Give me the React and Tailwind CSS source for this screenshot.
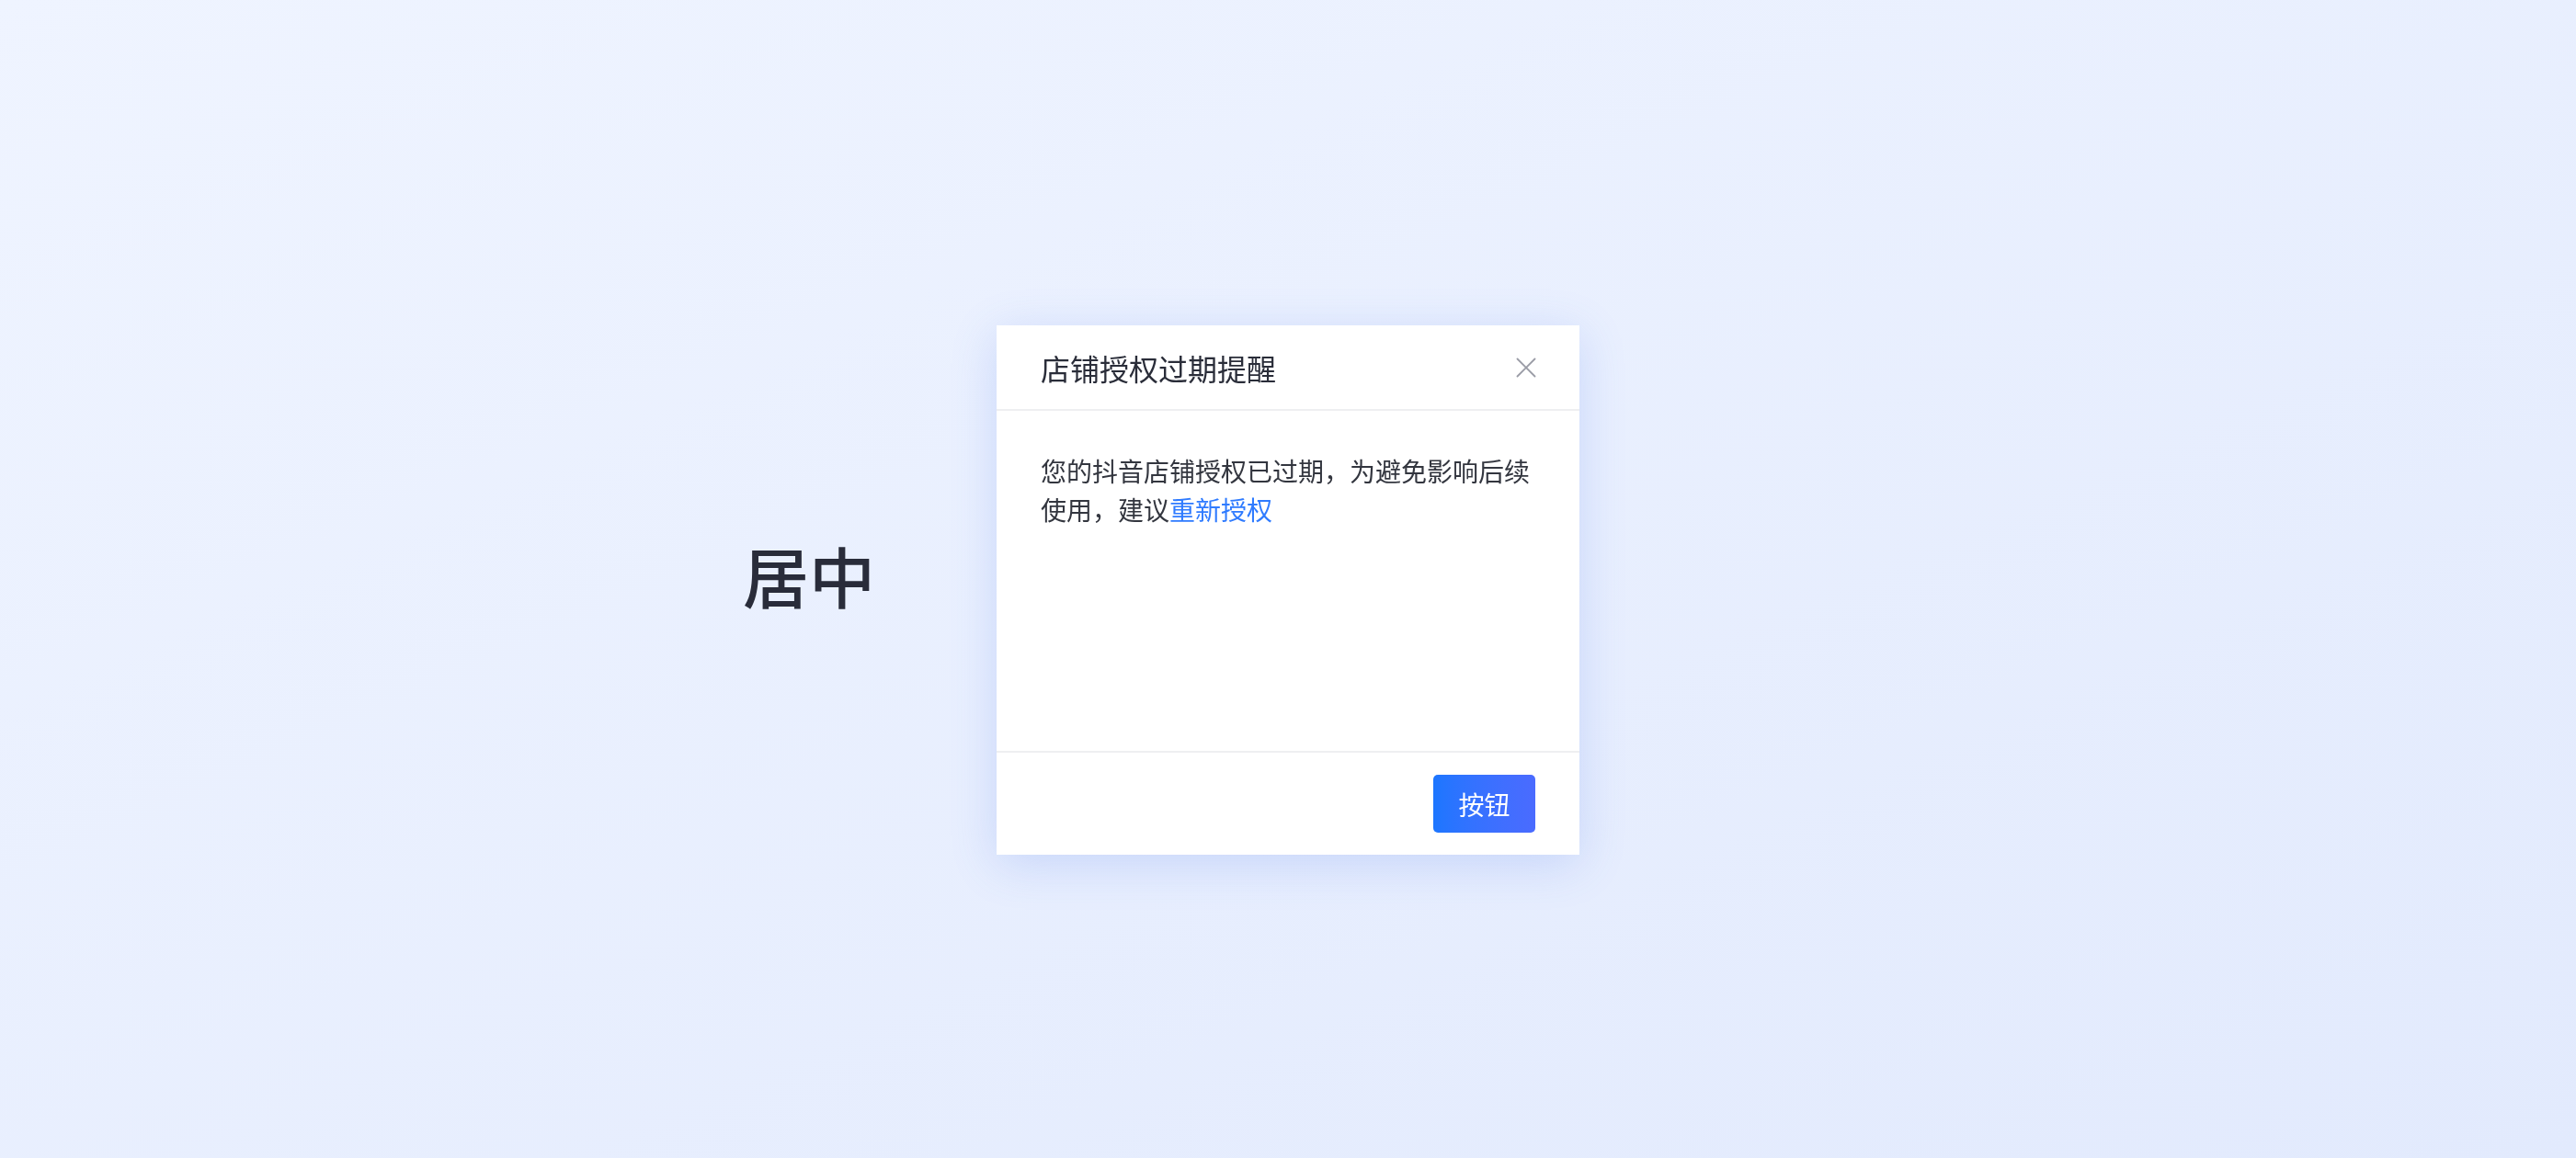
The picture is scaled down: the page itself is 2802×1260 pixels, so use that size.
const FONT = '"Noto Sans CJK SC", "Noto Sans", sans-serif';

function CloseIcon() {
  return (
    <svg width="22" height="22" viewBox="0 0 22 22" fill="none" stroke="currentColor" strokeWidth="1.8" strokeLinecap="round">
      <path d="M1.5 1.5l19 19M20.5 1.5l-19 19" />
    </svg>
  );
}

function ExpiredAuthModal() {
  return (
    <div className="fixed inset-0 flex items-center justify-center pt-[24px]">
      <div className="flex h-[576px] w-[634px] flex-col bg-white shadow-[0_10px_48px_rgba(70,115,235,0.2)]">
        <div className="flex h-[93px] items-center justify-between border-b-2 border-[#eeeff1] pr-[46px] pl-[48px]">
          <h2 className="text-[32px] leading-none font-normal text-[#2a2d39]">店铺授权过期提醒</h2>
          <button className="flex h-[24px] w-[24px] items-center justify-center text-[#9a9ca6]">
            <CloseIcon />
          </button>
        </div>

        <div className="flex-1 px-[48px] pt-[44px]">
          <p className="text-[28px] leading-[42px] text-[#33363f]">
            您的抖音店铺授权已过期，为避免影响后续使用，建议
            <a className="text-[#2f7bff]">重新授权</a>
          </p>
        </div>

        <div className="flex justify-end border-t-2 border-[#eeeff1] px-[48px] py-[24px]">
          <button className="flex h-[63px] w-[111px] items-center justify-center rounded-[5px] bg-gradient-to-r from-[#1c76ff] to-[#4a6bff] text-[28px] leading-none text-white">
            按钮
          </button>
        </div>
      </div>
    </div>
  );
}

export default function App() {
  return (
    <div
      className="flex h-screen w-full items-center bg-gradient-to-br from-[#eff4ff] to-[#e2eafd] pb-[10px] pl-[808px]"
      style={{ fontFamily: FONT }}
    >
      <span className="text-[72px] leading-none font-medium text-[#292c3a]">居中</span>
      <ExpiredAuthModal />
    </div>
  );
}
